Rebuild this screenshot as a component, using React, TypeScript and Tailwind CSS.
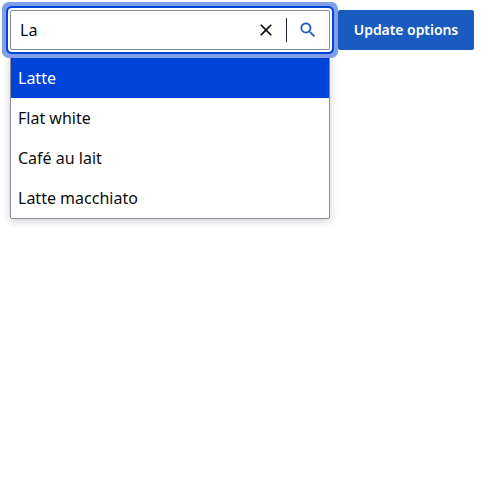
const options = ["Latte", "Flat white", "Café au lait", "Latte macchiato"];

export default function App() {
  return (
    <div className="h-[500px] w-[500px] overflow-hidden bg-white p-2.5 font-['Noto_Sans',sans-serif] text-base leading-6 text-[#0d0d0d]">
      <div className="relative z-10 flex w-[464px] gap-2">
        <div className="flex h-10 w-80 items-center rounded-[2px] border border-[#8a8d9b] bg-white shadow-[0_0_0_2px_#fff,0_0_0_4px_#0043d9,0_0_0_8px_#809fe8]">
          <input className="h-[38px] w-[235px] bg-transparent pl-[9px] outline-none" defaultValue="La" aria-label="Coffee" />
          <button aria-label="Clear" className="flex h-[38px] w-10 items-center justify-center">
            <svg width="20" height="20" viewBox="0 0 24 24" fill="currentColor"><path d="M19 6.41 17.59 5 12 10.59 6.41 5 5 6.41 10.59 12 5 17.59 6.41 19 12 13.41 17.59 19 19 17.59 13.41 12z" /></svg>
          </button>
          <span className="h-6 w-px bg-[#202630]" />
          <button aria-label="Search" className="flex h-[38px] grow items-center justify-center text-[#1a5bc4]">
            <svg width="20" height="20" viewBox="0 0 24 24" fill="currentColor" stroke="currentColor" strokeWidth="0.15"><path d="M15.5 14h-.79l-.28-.27A6.471 6.471 0 0 0 16 9.5 6.5 6.5 0 1 0 9.5 16c1.61 0 3.09-.59 4.23-1.57l.27.28v.79l5 4.99L20.49 19zm-6 0C7.01 14 5 11.99 5 9.5S7.01 5 9.5 5 14 7.01 14 9.5 11.99 14 9.5 14z" /></svg>
          </button>
        </div>
        <button className="h-10 grow rounded-[2px] bg-[#1a5bc0] text-sm font-semibold tracking-[-0.06px] text-white">Update options</button>
      </div>
      <ul className="mt-[7px] w-80 rounded-[2px] border border-[#8a8d9b] bg-white shadow-[0_2px_8px_rgba(0,0,0,0.2)]">
        {options.map((option, i) => (
          <li key={option} className={`flex h-10 items-center px-[7px] ${i === 0 ? "bg-[#0043d9] text-white" : ""}`}>{option}</li>
        ))}
      </ul>
    </div>
  );
}
